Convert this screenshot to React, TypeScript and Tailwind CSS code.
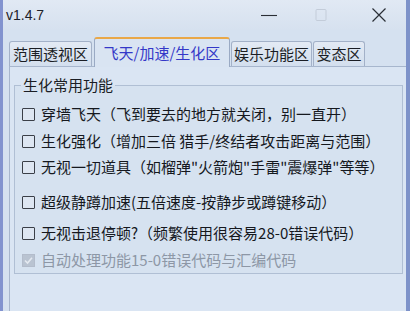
import React from "react";

const FONT = "font-['Noto_Sans_CJK_SC','Noto_Sans',sans-serif]";

const rows: { text: string; mt: string; disabled?: boolean }[] = [
  { text: "穿墙飞天（飞到要去的地方就关闭，别一直开）", mt: "mt-[8px]" },
  { text: "生化强化（增加三倍 猎手/终结者攻击距离与范围）", mt: "mt-[5px]" },
  { text: "无视一切道具（如榴弹\"火箭炮\"手雷\"震爆弹\"等等）", mt: "mt-[4px]" },
  { text: "超级静蹲加速(五倍速度-按静步或蹲键移动）", mt: "mt-[13px]" },
  { text: "无视击退停顿?（频繁使用很容易28-0错误代码）", mt: "mt-[9px]" },
  { text: "自动处理功能15-0错误代码与汇编代码", mt: "mt-[5px]", disabled: true },
];

function Check({ disabled }: { disabled?: boolean }) {
  if (disabled) {
    return (
      <span className="flex h-[13px] w-[13px] shrink-0 items-center justify-center border border-[#b3bccb] bg-[#b9c3d1]">
        <svg width="9" height="9" viewBox="0 0 9 9" fill="none" stroke="#e4e9f0" strokeWidth="1.6">
          <path d="M1 4.5 3.5 7 8 1.8" />
        </svg>
      </span>
    );
  }
  return <span className="h-[13px] w-[13px] shrink-0 rounded-[1px] border border-[#3a3f48] bg-[#dde6f2]" />;
}

function Tab({ label, w, ml, active }: { label: string; w: string; ml: string; active?: boolean }) {
  if (active) {
    return (
      <div
        className={`${w} ${ml} relative z-10 -mb-px flex h-[30px] items-center justify-center rounded-t-[3px] border border-b-0 border-[#9aaac4] border-t-[#e9a849] border-t-2 bg-[#d9e4f2] text-[15px] text-[#3438c8]`}
      >
        {label}
      </div>
    );
  }
  return (
    <div
      className={`${w} ${ml} flex h-[25px] items-center justify-center rounded-t-[3px] border border-b-0 border-[#a3b1c8] bg-gradient-to-b from-[#e3eaf4] to-[#d3dfee] text-[15px] text-[#1a1d24]`}
    >
      {label}
    </div>
  );
}

export default function App() {
  return (
    <div className={`${FONT} flex h-[311px] w-[410px] flex-col overflow-hidden border-l-[3px] border-r-[4px] border-l-[#8293cf] border-r-[#7d92c9] bg-[#d5e1f0]`}>
      {/* title bar */}
      <div className="flex h-[30px] shrink-0 items-center bg-gradient-to-b from-[#e1e9f4] to-[#d6e1ef]">
        <span className="pl-[3px] font-['Liberation_Sans',sans-serif] text-[14px] text-[#1d2129]">v1.4.7</span>
        <div className="ml-auto flex items-center">
          <svg width="18" height="16" viewBox="0 0 18 16" className="mr-[36px]">
            <path d="M1 8.5h16" stroke="#2a2e36" strokeWidth="1.1" />
          </svg>
          <svg width="14" height="14" viewBox="0 0 14 14" className="mr-[43px]">
            <rect x="2" y="1.5" width="10" height="11" rx="1" fill="none" stroke="#c3ccd9" strokeWidth="1" />
          </svg>
          <svg width="16" height="16" viewBox="0 0 16 16" className="mr-[19px]">
            <path d="M1.5 1.5 14.5 14.5M14.5 1.5 1.5 14.5" stroke="#2a2e36" strokeWidth="1.2" />
          </svg>
        </div>
      </div>

      {/* tabs */}
      <div className="mt-[7px] flex h-[29px] shrink-0 items-end">
        <Tab label="范围透视区" w="w-[83px]" ml="ml-[6px]" />
        <Tab label="飞天/加速/生化区" w="w-[136px]" ml="ml-[2px]" active />
        <Tab label="娱乐功能区" w="w-[81px]" ml="ml-[1px]" />
        <Tab label="变态区" w="w-[52px]" ml="ml-[1px]" />
      </div>

      {/* panel */}
      <div className="ml-[6px] flex-1 border border-b-0 border-r-0 border-[#a7b6cd] bg-[#dae5f3] pt-[8px]">
        <fieldset className="ml-[4px] mr-[3px] border border-[#b0bfd4] bg-[#d6e2f0] pb-[2px] pl-[7px]">
          <legend className="-ml-[1px] px-[2px] text-[15px] leading-[20px] text-[#1a1d24]">生化常用功能</legend>
          {rows.map((r) => (
            <div key={r.text} className={`${r.mt} flex h-[22px] items-center gap-[6px]`}>
              <Check disabled={r.disabled} />
              <span className={`whitespace-nowrap text-[15px] ${r.disabled ? "text-[#8d97a6]" : "text-[#15181e]"}`}>
                {r.text}
              </span>
            </div>
          ))}
        </fieldset>
      </div>
    </div>
  );
}
